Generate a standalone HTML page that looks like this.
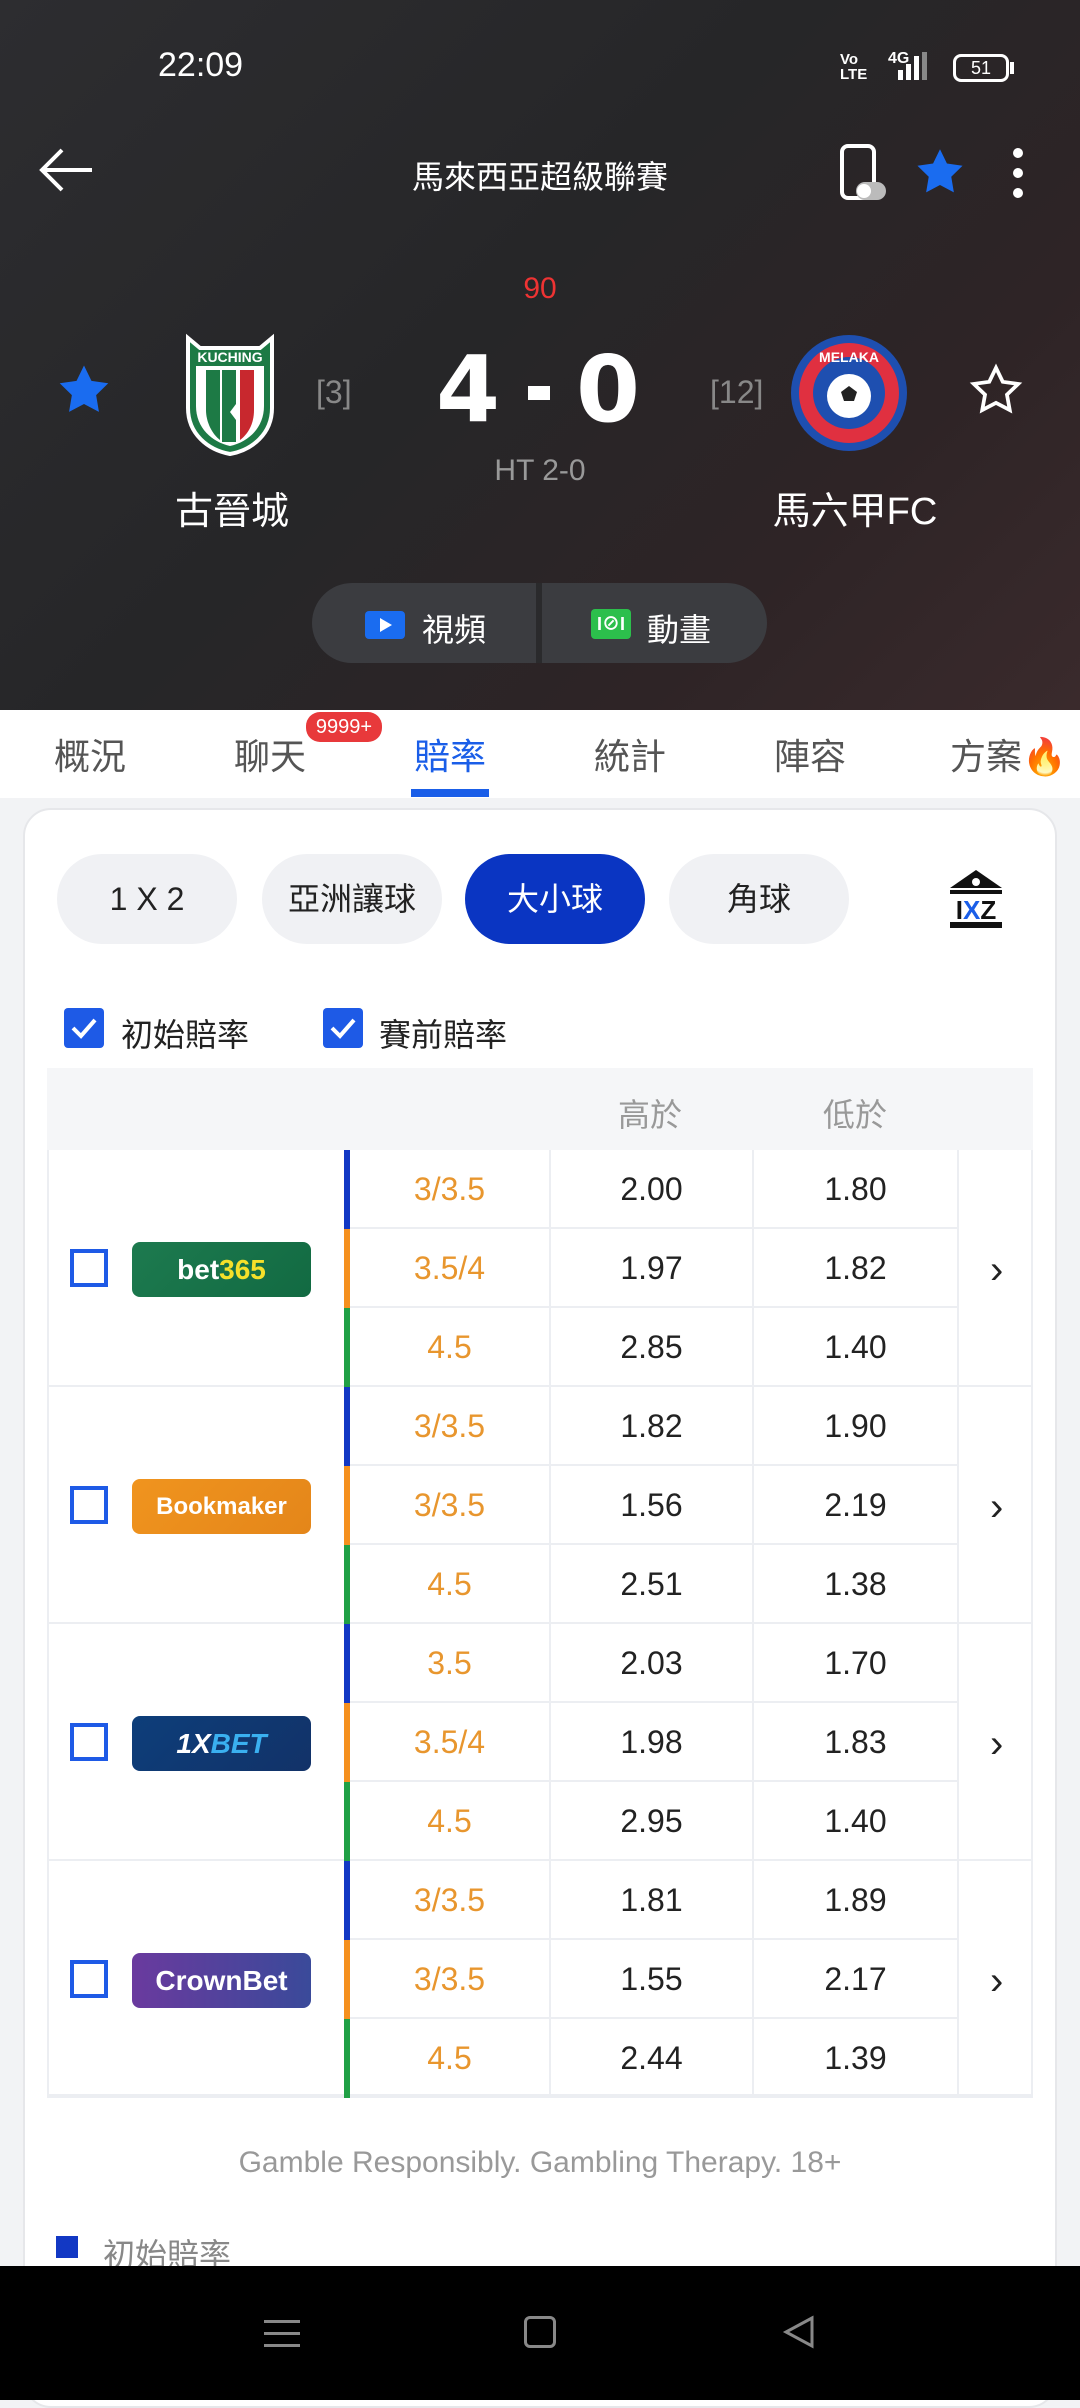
<!DOCTYPE html>
<html><head><meta charset="utf-8"><style>
*{margin:0;padding:0;box-sizing:border-box}
body{width:1080px;height:2400px;position:relative;overflow:hidden;background:#f2f3f5;font-family:"Liberation Sans","Noto Sans CJK TC",sans-serif}
.a{position:absolute;white-space:nowrap}
.hdr{left:0;top:0;width:1080px;height:710px;background:linear-gradient(135deg,#2d2d30 0%,#262628 45%,#2e2426 75%,#3a2a2c 100%)}
.w{color:#fff}
.c{text-align:center}
.pill{top:854px;height:90px;width:180px;border-radius:45px;background:#f0f1f4;font-size:32px;line-height:90px;text-align:center;color:#222}
.tab{top:728px;font-size:36px;color:#555;width:120px;text-align:center}
.cell{border-right:2px solid #eceef2;border-bottom:2px solid #eceef2;text-align:center;font-size:32px;line-height:79px;height:79px}
.ln{color:#e8962e}
.cb{width:38px;height:38px;border:4px solid #1e5ae6}
.logo{width:179px;height:55px;border-radius:8px;color:#fff;font-weight:bold;text-align:center;line-height:55px}
.sc{top:340px;font-size:92px;font-weight:bold;font-family:"DejaVu Sans",sans-serif;color:#fff;width:90px;text-align:center;line-height:100px}
</style></head><body>
<div class="a hdr"></div>
<div class="a w" style="left:158px;top:46px;font-size:34px">22:09</div>
<div class="a w" style="left:840px;top:52px;font-size:15px;font-weight:bold;line-height:15px">Vo<br>LTE</div>
<div class="a w" style="left:888px;top:50px;font-size:16px;font-weight:bold">4G</div>
<div class="a" style="left:898px;top:70px;width:5px;height:10px;background:#fff"></div>
<div class="a" style="left:906px;top:64px;width:5px;height:16px;background:#fff"></div>
<div class="a" style="left:914px;top:56px;width:5px;height:24px;background:#fff"></div>
<div class="a" style="left:922px;top:52px;width:5px;height:28px;background:#888"></div>
<div class="a w c" style="left:953px;top:54px;width:56px;height:28px;border:3px solid #fff;border-radius:8px;font-size:18px;line-height:22px">51</div>
<div class="a" style="left:1010px;top:62px;width:4px;height:12px;background:#fff"></div>
<svg class="a" style="left:36px;top:146px" width="60" height="50"><path d="M56 24H6M26 4L6 24l20 20" stroke="#fff" stroke-width="4" fill="none"/></svg>
<div class="a w c" style="left:340px;top:152px;width:400px;font-size:32px">馬來西亞超級聯賽</div>
<svg class="a" style="left:838px;top:144px" width="52" height="58"><rect x="4" y="2" width="32" height="52" rx="6" stroke="#fff" stroke-width="4" fill="none"/><rect x="18" y="38" width="30" height="18" rx="9" fill="#bbb"/><circle cx="26" cy="47" r="7" fill="#fff"/></svg>
<svg class="a" style="left:914px;top:146px" width="52" height="52" viewBox="0 0 24 24"><path d="M12 1.5l3.2 6.6 7.2 1-5.2 5.1 1.2 7.2L12 18l-6.4 3.4 1.2-7.2L1.6 9.1l7.2-1z" fill="#1a6cf0"/></svg>
<div class="a" style="left:1013px;top:148px;width:10px;height:10px;border-radius:5px;background:#fff;box-shadow:0 20px 0 #fff,0 40px 0 #fff"></div>
<div class="a c" style="left:500px;top:272px;width:80px;font-size:30px;color:#e33">90</div>
<svg class="a" style="left:56px;top:362px" width="56" height="56" viewBox="0 0 24 24"><path d="M12 1.5l3.2 6.6 7.2 1-5.2 5.1 1.2 7.2L12 18l-6.4 3.4 1.2-7.2L1.6 9.1l7.2-1z" fill="#1a6cf0"/></svg>
<svg class="a" style="left:184px;top:332px" width="92" height="124" viewBox="0 0 92 124"><path d="M4 6l12 10h60l12-10v70c0 26-20 42-42 46C24 118 4 102 4 76z" fill="#1d7a45" stroke="#fff" stroke-width="4"/><path d="M12 34h68v40c0 22-16 36-34 40-18-4-34-18-34-40z" fill="#fff"/><path d="M22 38h14v70c-8-6-14-18-14-30z" fill="#1d7a45"/><path d="M56 38h14v40c0 14-6 24-14 30z" fill="#c8282e"/><path d="M38 38h14v34l-6 8 6 8v22h-14z" fill="#1d7a45"/><text x="46" y="30" font-size="14" font-weight="bold" fill="#fff" text-anchor="middle" font-family="Liberation Sans">KUCHING</text></svg>
<div class="a c" style="left:316px;top:374px;font-size:32px;color:#888">[3]</div>
<div class="a sc" style="left:423px">4</div>
<div class="a" style="left:528px;top:386px;width:22px;height:14px;background:#fff"></div>
<div class="a sc" style="left:563px">0</div>
<div class="a c" style="left:460px;top:454px;width:160px;font-size:30px;color:#999">HT 2-0</div>
<div class="a c" style="left:710px;top:374px;font-size:32px;color:#888">[12]</div>
<svg class="a" style="left:788px;top:332px" width="122" height="122" viewBox="0 0 122 122"><circle cx="61" cy="61" r="58" fill="#1e4fb0"/><circle cx="61" cy="61" r="50" fill="#e03040"/><circle cx="61" cy="61" r="36" fill="#1e4fb0"/><circle cx="61" cy="64" r="22" fill="#fff"/><path d="M61 54l8 6-3 9h-10l-3-9z" fill="#222"/><text x="61" y="30" font-size="14" font-weight="bold" fill="#fff" text-anchor="middle" font-family="Liberation Sans">MELAKA</text></svg>
<svg class="a" style="left:968px;top:362px" width="56" height="56" viewBox="0 0 24 24"><path d="M12 2.5l2.9 6 6.6.9-4.8 4.6 1.2 6.6L12 17.5l-5.9 3.1 1.2-6.6-4.8-4.6 6.6-.9z" fill="none" stroke="#fff" stroke-width="1.6"/></svg>
<div class="a w c" style="left:132px;top:480px;width:200px;font-size:38px">古晉城</div>
<div class="a w c" style="left:750px;top:480px;width:210px;font-size:38px">馬六甲FC</div>
<div class="a" style="left:312px;top:583px;width:455px;height:80px;border-radius:40px;background:#3b3c40;overflow:hidden"><div class="a" style="left:224px;top:0;width:6px;height:80px;background:#2a2a2c"></div></div>
<div class="a" style="left:365px;top:611px;width:40px;height:28px;border-radius:4px;background:#1a6cf0"></div>
<div class="a" style="left:380px;top:618px;width:0;height:0;border-left:12px solid #fff;border-top:7px solid transparent;border-bottom:7px solid transparent"></div>
<div class="a w" style="left:422px;top:605px;font-size:32px">視頻</div>
<div class="a w c" style="left:591px;top:609px;width:40px;height:30px;border-radius:4px;background:#2cbf4c;font-size:18px;line-height:30px;font-weight:bold">I⊘I</div>
<div class="a w" style="left:647px;top:605px;font-size:32px">動畫</div>
<div class="a" style="left:0;top:710px;width:1080px;height:88px;background:#fff"></div>
<div class="a tab" style="left:30px">概況</div>
<div class="a tab" style="left:210px">聊天</div>
<div class="a w c" style="left:306px;top:712px;width:76px;height:30px;border-radius:14px;background:#e8393b;font-size:20px;line-height:30px">9999+</div>
<div class="a tab" style="left:390px;color:#1a5ee8">賠率</div>
<div class="a" style="left:411px;top:789px;width:78px;height:8px;background:#1a5ee8"></div>
<div class="a tab" style="left:570px">統計</div>
<div class="a tab" style="left:750px">陣容</div>
<div class="a tab" style="left:950px;width:auto">方案<span style="color:#f26a2a">🔥</span></div>
<div class="a" style="left:23px;top:808px;width:1034px;height:1600px;background:#fff;border-radius:28px;border:2px solid #e6e7ea"></div>
<div class="a pill" style="left:57px">1 X 2</div>
<div class="a pill" style="left:262px">亞洲讓球</div>
<div class="a pill" style="left:465px;background:#0a35c2;color:#fff">大小球</div>
<div class="a pill" style="left:669px">角球</div>
<svg class="a" style="left:946px;top:868px" width="60" height="62" viewBox="0 0 60 62"><path d="M30 2L4 20h52z" fill="#111"/><circle cx="30" cy="14" r="4" fill="#fff"/><rect x="4" y="22" width="52" height="4" fill="#111"/><rect x="4" y="54" width="52" height="6" fill="#111"/><text x="30" y="51" font-size="26" font-weight="bold" text-anchor="middle" font-family="Liberation Sans" fill="#111">I<tspan fill="#1a5ee8">X</tspan>Z</text></svg>
<div class="a" style="left:64px;top:1008px;width:40px;height:40px;border-radius:4px;background:#1e5ae6"></div>
<svg class="a" style="left:64px;top:1008px" width="40" height="40"><path d="M9 20l8 8 14-16" stroke="#fff" stroke-width="4" fill="none"/></svg>
<div class="a" style="left:121px;top:1010px;font-size:32px;color:#222">初始賠率</div>
<div class="a" style="left:323px;top:1008px;width:40px;height:40px;border-radius:4px;background:#1e5ae6"></div>
<svg class="a" style="left:323px;top:1008px" width="40" height="40"><path d="M9 20l8 8 14-16" stroke="#fff" stroke-width="4" fill="none"/></svg>
<div class="a" style="left:379px;top:1010px;font-size:32px;color:#222">賽前賠率</div>
<div class="a" style="left:47px;top:1068px;width:986px;height:82px;background:#f5f6f8"></div>
<div class="a c" style="left:600px;top:1090px;width:100px;font-size:32px;color:#999">高於</div>
<div class="a c" style="left:805px;top:1090px;width:100px;font-size:32px;color:#999">低於</div>
<div class="a" style="left:47px;top:1150px;width:986px;height:946px;border:2px solid #eceef2;border-top:none"></div>
<div id="rows"></div>
<script>
var data=[["bet365","linear-gradient(135deg,#1d7a4f,#126a42)",[["3/3.5","2.00","1.80"],["3.5/4","1.97","1.82"],["4.5","2.85","1.40"]]],
["Bookmaker","linear-gradient(135deg,#f0941e,#e4861a)",[["3/3.5","1.82","1.90"],["3/3.5","1.56","2.19"],["4.5","2.51","1.38"]]],
["1XBET","linear-gradient(135deg,#0d3e7a,#123268)",[["3.5","2.03","1.70"],["3.5/4","1.98","1.83"],["4.5","2.95","1.40"]]],
["CrownBet","linear-gradient(90deg,#6a3a9e,#3a4a9a)",[["3/3.5","1.81","1.89"],["3/3.5","1.55","2.17"],["4.5","2.44","1.39"]]]];
var h="",cols=["#1238c4","#f5901e","#20a045"];
data.forEach(function(d,i){var y=1150+237*i;
h+='<div class="a" style="left:47px;top:'+(y+235)+'px;width:986px;height:2px;background:#eceef2"></div>';
h+='<div class="a cb" style="left:70px;top:'+(y+99)+'px"></div>';
var lbl=d[0]=="bet365"?'bet<span style="color:#f5e02a">365</span>':d[0]=="1XBET"?'<i>1X<span style="color:#3ab0f0">BET</span></i>':d[0];
h+='<div class="a logo" style="left:132px;top:'+(y+92)+'px;background:'+d[1]+';font-size:'+(d[0]=="Bookmaker"?24:28)+'px">'+lbl+'</div>';
h+='<div class="a" style="left:990px;top:'+(y+98)+'px;font-size:40px;color:#222">&#8250;</div>';
d[2].forEach(function(r,j){var yy=y+j*79;
h+='<div class="a" style="left:344px;top:'+yy+'px;width:6px;height:79px;background:'+cols[j]+'"></div>';
h+='<div class="a cell ln" style="left:350px;top:'+yy+'px;width:201px">'+r[0]+'</div>';
h+='<div class="a cell" style="left:551px;top:'+yy+'px;width:203px;color:#222">'+r[1]+'</div>';
h+='<div class="a cell" style="left:754px;top:'+yy+'px;width:205px;color:#222">'+r[2]+'</div>';
});});
document.getElementById("rows").innerHTML=h;
</script>
<div class="a c" style="left:0;top:2146px;width:1080px;font-size:30px;color:#999">Gamble Responsibly. Gambling Therapy. 18+</div>
<div class="a" style="left:56px;top:2236px;width:22px;height:22px;background:#1238c4"></div>
<div class="a" style="left:103px;top:2230px;font-size:32px;color:#888">初始賠率</div>
<div class="a" style="left:0;top:2266px;width:1080px;height:134px;background:#000"></div>
<div class="a" style="left:264px;top:2320px;width:36px;height:3px;background:#888;box-shadow:0 12px 0 #888,0 24px 0 #888"></div>
<div class="a" style="left:524px;top:2316px;width:32px;height:32px;border:3px solid #888;border-radius:6px"></div>
<svg class="a" style="left:780px;top:2314px" width="36" height="36"><path d="M32 4L6 18l26 14z" stroke="#888" stroke-width="3" fill="none"/></svg>
</body></html>
